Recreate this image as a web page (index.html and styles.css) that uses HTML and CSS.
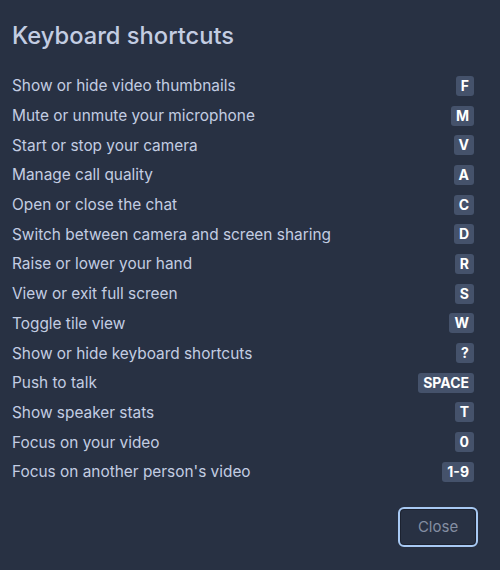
FILE: index.html
```html
<!DOCTYPE html>
<html lang="en">

<head>
    <meta charset="UTF-8">
    <meta name="viewport" content="width=device-width, initial-scale=1.0">
    <title>Keyboard shortcuts</title>
    <link rel="stylesheet" href="styles.css">
</head>

<body>
    <div class="dialog">
        <h1 class="dialog__title">Keyboard shortcuts</h1>
        <ul class="shortcuts">
            <li class="shortcut"><span class="shortcut__label">Show or hide video thumbnails</span><span class="shortcut__key">F</span></li>
            <li class="shortcut"><span class="shortcut__label">Mute or unmute your microphone</span><span class="shortcut__key">M</span></li>
            <li class="shortcut"><span class="shortcut__label">Start or stop your camera</span><span class="shortcut__key">V</span></li>
            <li class="shortcut"><span class="shortcut__label">Manage call quality</span><span class="shortcut__key">A</span></li>
            <li class="shortcut"><span class="shortcut__label">Open or close the chat</span><span class="shortcut__key">C</span></li>
            <li class="shortcut"><span class="shortcut__label">Switch between camera and screen sharing</span><span class="shortcut__key">D</span></li>
            <li class="shortcut"><span class="shortcut__label">Raise or lower your hand</span><span class="shortcut__key">R</span></li>
            <li class="shortcut"><span class="shortcut__label">View or exit full screen</span><span class="shortcut__key">S</span></li>
            <li class="shortcut"><span class="shortcut__label">Toggle tile view</span><span class="shortcut__key">W</span></li>
            <li class="shortcut"><span class="shortcut__label">Show or hide keyboard shortcuts</span><span class="shortcut__key">?</span></li>
            <li class="shortcut"><span class="shortcut__label">Push to talk</span><span class="shortcut__key">SPACE</span></li>
            <li class="shortcut"><span class="shortcut__label">Show speaker stats</span><span class="shortcut__key">T</span></li>
            <li class="shortcut"><span class="shortcut__label">Focus on your video</span><span class="shortcut__key">0</span></li>
            <li class="shortcut"><span class="shortcut__label">Focus on another person's video</span><span class="shortcut__key">1-9</span></li>
        </ul>
        <div class="dialog__footer">
            <button class="button">Close</button>
        </div>
    </div>
</body>

</html>
```

FILE: styles.css
```css
* {
    box-sizing: border-box;
}

html,
body {
    width: 100%;
    height: 100%;
}

body {
    margin: 0;
    padding: 0;
    overflow: hidden;
    font-family: Inter, 'Liberation Sans', Arial, sans-serif;
    background-color: #283143;
    color: #c3cde2;
}

.dialog {
    padding: 20px 26px 0 12px;
}

.dialog__title {
    margin: 0;
    font-size: 23.7px;
    font-weight: 500;
    line-height: 32px;
    color: #c3cde2;
}

.shortcuts {
    list-style: none;
    margin: 19px 0 0 0;
    padding: 0;
}

.shortcut {
    display: flex;
    justify-content: space-between;
    align-items: center;
    height: 29.7px;
    font-size: 15.4px;
}

.shortcut__key {
    display: inline-block;
    min-width: 18px;
    height: 20px;
    line-height: 20px;
    padding: 0 5px;
    border-radius: 3px;
    background-color: #45526b;
    color: #fff;
    font-size: 14px;
    font-weight: 700;
    text-align: center;
}

.dialog__footer {
    display: flex;
    justify-content: flex-end;
    margin-top: 22px;
}

.button {
    width: 76px;
    height: 36px;
    margin-right: -2px;
    border: 1px solid #1c2230;
    border-radius: 4px;
    outline: 2px solid #a8c9f3;
    background: transparent;
    color: #848ea2;
    font-family: inherit;
    font-size: 15px;
}
```
